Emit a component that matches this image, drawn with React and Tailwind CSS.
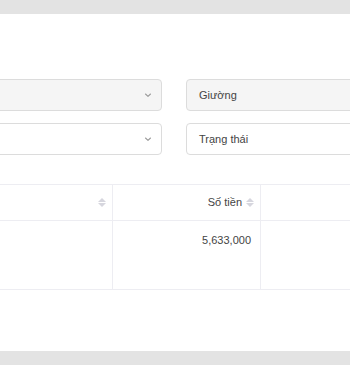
import React from "react";

const Chevron = () => (
  <svg width="10" height="10" viewBox="0 0 10 10" fill="none" className="text-[#9a9a9a]">
    <path d="M2.5 4l2.5 2.3L7.5 4" stroke="currentColor" strokeWidth="1.1" strokeLinecap="round" strokeLinejoin="round" />
  </svg>
);

const SortIcon = () => (
  <span className="flex flex-col items-center gap-[1px] text-[#d6d6de]">
    <svg width="8" height="4" viewBox="0 0 8 4">
      <path d="M0 4L4 0L8 4Z" fill="currentColor" />
    </svg>
    <svg width="8" height="4" viewBox="0 0 8 4">
      <path d="M0 0L4 4L8 0Z" fill="currentColor" />
    </svg>
  </span>
);

export default function App() {
  return (
    <div
      className="w-[350px] h-[365px] flex flex-col bg-[#e3e3e3] overflow-hidden text-[#333]"
      style={{ fontFamily: '"Liberation Sans", Arial, sans-serif' }}
    >
      <div className="h-[14px] shrink-0" />
      <div className="flex-1 bg-white pt-[65px] overflow-hidden">
        {/* filters */}
        <div className="flex flex-col gap-3 ml-[-138px]">
          <div className="flex gap-6">
            <div className="w-[300px] h-[32px] shrink-0 rounded border border-[#dcdcdc] bg-[#f5f5f5] flex items-center justify-end pr-[8px]">
              <Chevron />
            </div>
            <div className="w-[300px] h-[32px] shrink-0 rounded border border-[#dcdcdc] bg-[#f5f5f5] flex items-center pl-[12px] text-[11px] text-[#444]">
              Giường
            </div>
          </div>
          <div className="flex gap-6">
            <div className="w-[300px] h-[32px] shrink-0 rounded border border-[#dcdcdc] bg-white flex items-center justify-end pr-[8px]">
              <Chevron />
            </div>
            <div className="w-[300px] h-[32px] shrink-0 rounded border border-[#dcdcdc] bg-white flex items-center pl-[12px] text-[11px] text-[#444]">
              Trạng thái
            </div>
          </div>
        </div>

        {/* table */}
        <div className="mt-[29px] border-t border-b border-[#ededf2] text-[11px]">
          <div className="flex h-[36px] border-b border-[#ededf2]">
            <div className="w-[113px] shrink-0 border-r border-[#ededf2] flex items-center justify-end pr-[6px]">
              <SortIcon />
            </div>
            <div className="w-[148px] shrink-0 border-r border-[#ededf2] flex items-center justify-end gap-[4px] pr-[6px] text-[#444]">
              <span>Số tiền</span>
              <SortIcon />
            </div>
            <div className="flex-1" />
          </div>
          <div className="flex h-[68px]">
            <div className="w-[113px] shrink-0 border-r border-[#ededf2]" />
            <div className="w-[148px] shrink-0 border-r border-[#ededf2] flex justify-end pr-[9px] pt-[11px] text-[#444]">
              5,633,000
            </div>
            <div className="flex-1" />
          </div>
        </div>
      </div>
      <div className="h-[14px] shrink-0" />
    </div>
  );
}
